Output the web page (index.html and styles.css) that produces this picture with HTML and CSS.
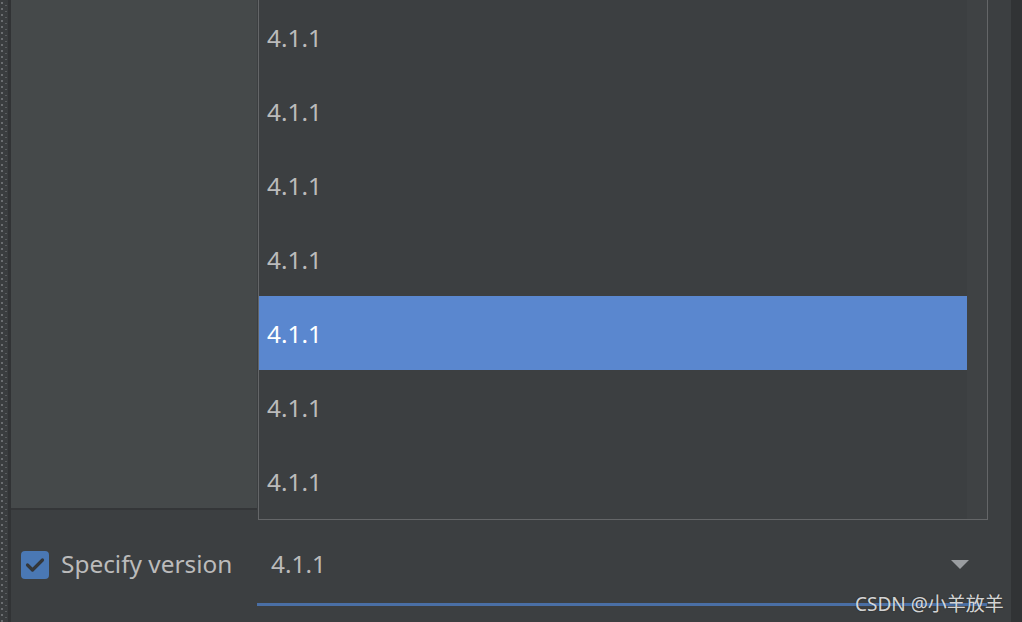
FILE: index.html
```html
<!DOCTYPE html>
<html lang="en">
<head>
<meta charset="utf-8">
<title>Specify version</title>
<link rel="stylesheet" href="styles.css">
</head>
<body>
<div class="window">
  <div class="gutter"></div>
  <div class="gutter-edge"></div>
  <div class="content">
    <div class="panel"></div>
    <div class="form-row">
      <label class="check-group">
        <span class="checkbox">
          <svg width="28" height="28" viewBox="0 0 28 28"><path d="M6.5 14 L11.5 19 L21.5 9" fill="none" stroke="#34373a" stroke-width="3.2" stroke-linecap="round" stroke-linejoin="round"/></svg>
        </span>
        <span class="check-label">Specify version</span>
      </label>
      <div class="combo">
        <span class="combo-value">4.1.1</span>
        <span class="combo-arrow"></span>
      </div>
    </div>
    <div class="popup">
      <ul class="list">
        <li class="item">4.1.1</li>
        <li class="item">4.1.1</li>
        <li class="item">4.1.1</li>
        <li class="item">4.1.1</li>
        <li class="item selected">4.1.1</li>
        <li class="item">4.1.1</li>
        <li class="item">4.1.1</li>
      </ul>
      <div class="scroll-track"></div>
    </div>
  </div>
  <div class="right-strip"></div>
  <div class="watermark">CSDN @小羊放羊</div>
</div>
</body>
</html>
```

FILE: styles.css
```css
html, body {
  margin: 0;
  padding: 0;
}
body {
  width: 1022px;
  height: 622px;
  overflow: hidden;
  background: #3c3f41;
  font-family: "Noto Sans", "Open Sans", sans-serif;
}
.window {
  position: relative;
  display: flex;
  width: 1022px;
  height: 622px;
  background: #3c3f41;
}
.gutter {
  width: 8px;
  flex: none;
  background-color: #3a3d3f;
  background-image: radial-gradient(circle at 2px 3px, #6a6d70 0.9px, transparent 1.3px),
                    radial-gradient(circle at 6px 6px, #5a5d60 0.9px, transparent 1.3px);
  background-size: 8px 6px, 8px 6px;
}
.gutter-edge {
  width: 3px;
  flex: none;
  background: #313335;
}
.content {
  position: relative;
  flex: 1;
  display: flex;
  flex-direction: column;
}
.panel {
  width: 246px;
  height: 508px;
  background: #45494a;
  border-bottom: 2px solid #343638;
}
.form-row {
  display: flex;
  height: 80px;
  margin-top: 16px;
}
.check-group {
  width: 246px;
  padding-left: 10px;
  padding-bottom: 3px;
  display: flex;
  align-items: center;
  gap: 12px;
  box-sizing: border-box;
}
.checkbox {
  width: 28px;
  height: 28px;
  border-radius: 4px;
  background: #4a78b4;
  display: flex;
}
.check-label {
  color: #bbbbbb;
  font-size: 24.4px;
  line-height: 1;
}
.combo {
  width: 730px;
  box-sizing: border-box;
  display: flex;
  align-items: center;
  justify-content: space-between;
  padding: 0 18px 0 14px;
  border-bottom: 3px solid #4a6fa5;
}
.combo-value {
  color: #bbbbbb;
  font-size: 24.4px;
  line-height: 1;
}
.combo-arrow {
  width: 0;
  height: 0;
  border-left: 9px solid transparent;
  border-right: 9px solid transparent;
  border-top: 9px solid #9a9da0;
}
.popup {
  position: absolute;
  left: 247px;
  top: 0;
  width: 730px;
  height: 520px;
  box-sizing: border-box;
  border: 1px solid #646668;
  border-top: none;
  background: #3c3f41;
  display: flex;
}
.list {
  list-style: none;
  margin: 0;
  padding: 0;
  width: 708px;
}
.item {
  height: 74px;
  display: flex;
  align-items: center;
  padding-left: 8px;
  color: #bbbbbb;
  font-size: 24.4px;
}
.item.selected {
  background: #5a87cf;
  color: #ffffff;
}
.scroll-track {
  flex: 1;
  background: #3f4244;
}
.right-strip {
  width: 11px;
  flex: none;
  background: #313335;
}
.watermark {
  position: absolute;
  left: 855px;
  top: 589px;
  font-family: "Noto Sans", "Noto Sans CJK SC", sans-serif;
  font-size: 19px;
  color: rgba(235, 235, 235, 0.9);
  text-shadow: 0 0 2px rgba(0, 0, 0, 0.4);
  white-space: nowrap;
}
```
